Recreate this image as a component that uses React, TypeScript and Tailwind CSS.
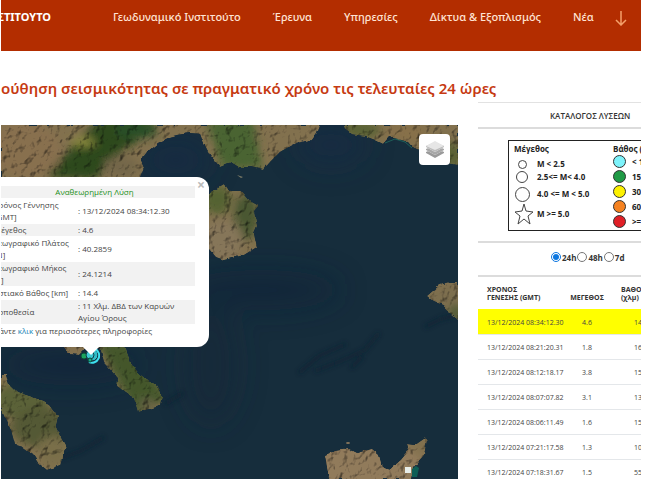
import { useState } from "react";

interface Quake {
    time: string;
    magnitude: string;
    depth: string;
}

const NAV_ITEMS = ["Γεωδυναμικό Ινστιτούτο", "Έρευνα", "Υπηρεσίες", "Δίκτυα & Εξοπλισμός", "Νέα"];

const QUAKES: Quake[] = [
    { time: "13/12/2024 08:34:12.30", magnitude: "4.6", depth: "14" },
    { time: "13/12/2024 08:21:20.31", magnitude: "1.8", depth: "16" },
    { time: "13/12/2024 08:12:18.17", magnitude: "3.8", depth: "15" },
    { time: "13/12/2024 08:07:07.82", magnitude: "3.1", depth: "13" },
    { time: "13/12/2024 08:06:11.49", magnitude: "1.6", depth: "15" },
    { time: "13/12/2024 07:21:17.58", magnitude: "1.3", depth: "10" },
    { time: "13/12/2024 07:18:31.67", magnitude: "1.5", depth: "55" },
];

const DETAILS = [
    { label: "Χρόνος Γέννησης [GMT]", value: "13/12/2024 08:34:12.30" },
    { label: "Μέγεθος", value: "4.6" },
    { label: "Γεωγραφικό Πλάτος [N]", value: "40.2859" },
    { label: "Γεωγραφικό Μήκος [E]", value: "24.1214" },
    { label: "Εστιακό Βάθος [km]", value: "14.4" },
    { label: "Τοποθεσία", value: "11 Χλμ. ΔΒΔ των Καρυών Αγίου Όρους" },
];

const DEPTHS = [
    { dot: "bg-[#7df3fb]", label: "< 15" },
    { dot: "bg-[#1f9a45]", label: "15" },
    { dot: "bg-[#fdf100]", label: "30" },
    { dot: "bg-[#f58220]", label: "60" },
    { dot: "bg-[#e01f26]", label: ">=" },
];

const RANGES = ["24h", "48h", "7d"];

// Coastlines of the north Aegean
const LAND = [
    "M0 0H319L316 8L311 15L296 18L286 23L279 27L270 36L262 45L250 42L239 42L231 37L219 42L209 30L202 17L199 9L189 8L176 10L169 12L157 18L146 27L140 35L143 42L138 55H0Z",
    "M344 0L346 6L350 9L364 11L374 15L382 19L388 12L397 14L407 17L412 23L419 25L432 35L457 40V0Z",
    "M207 72L212 66L222 60L230 66L240 66L247 75L258 81L253 87L256 101L253 108L256 122L243 130L223 135L215 132L208 124L200 100Z",
    "M60 218L67 228L78 229L85 222L99 222L103 238L117 253L116 261L124 267L133 273L137 287L159 281L161 271L155 260L138 249L129 236L124 222Z",
    "M0 250L5 250L8 259L16 267L34 273L49 280L57 291L55 300L60 311L65 320L61 333L59 340L46 345L37 338L32 330L21 322L14 320L10 305L2 290L0 284Z",
    "M324 330L334 326L348 324L356 328L371 324L378 330L381 342L388 345L400 335L408 325L406 319L414 320L424 313L426 316L423 330L412 343L410 354H328Z",
    "M426 171L439 160L449 157L457 157V195L449 188L442 180L432 176Z",
];

function SatelliteImage() {
    return (
        <svg
            className="absolute inset-0 h-full w-full"
            viewBox="0 0 457 354"
            preserveAspectRatio="xMinYMin slice"
            aria-hidden="true"
        >
            <defs>
                <clipPath id="land">
                    {LAND.map((d) => (
                        <path key={d} d={d} />
                    ))}
                </clipPath>
                <filter
                    id="relief"
                    filterUnits="userSpaceOnUse"
                    x="-10"
                    y="-10"
                    width="480"
                    height="380"
                    colorInterpolationFilters="sRGB"
                >
                    <feTurbulence type="fractalNoise" baseFrequency="0.11" numOctaves="4" seed="8" result="noise" />
                    <feDiffuseLighting in="noise" surfaceScale="2.4" diffuseConstant="1.3" lightingColor="#ffffff" result="light">
                        <feDistantLight azimuth="215" elevation="55" />
                    </feDiffuseLighting>
                    <feDisplacementMap in="SourceGraphic" in2="noise" scale="4" xChannelSelector="R" yChannelSelector="G" result="rough" />
                    <feComposite in="rough" in2="light" operator="arithmetic" k1="0.98" result="shaded" />
                    <feComposite in="shaded" in2="rough" operator="in" />
                </filter>
                <filter id="soft" filterUnits="userSpaceOnUse" x="-20" y="-20" width="500" height="400">
                    <feGaussianBlur stdDeviation="4" />
                </filter>
                <filter id="haze" filterUnits="userSpaceOnUse" x="-20" y="-20" width="500" height="400">
                    <feGaussianBlur stdDeviation="14" />
                </filter>
                <filter id="trench" filterUnits="userSpaceOnUse" x="-20" y="-20" width="500" height="400">
                    <feGaussianBlur stdDeviation="2" />
                </filter>
            </defs>

            <rect width="457" height="354" fill="#162d3c" />
            <g filter="url(#haze)" opacity="0.5">
                <ellipse cx="175" cy="35" rx="36" ry="24" fill="#122a46" />
                <ellipse cx="330" cy="20" rx="36" ry="22" fill="#132b47" />
                <ellipse cx="260" cy="165" rx="80" ry="20" fill="#0f2439" />
                <ellipse cx="70" cy="240" rx="70" ry="20" fill="#10233a" />
                <ellipse cx="210" cy="240" rx="28" ry="60" fill="#122638" />
            </g>
            <g filter="url(#trench)" fill="none" stroke="#0c2030" strokeWidth="4" opacity="0.6">
                <path d="M298 248L318 231L345 219" />
                <path d="M314 246L340 236L364 225L378 208" />
                <path d="M424 202L440 194L457 190" />
                <path d="M164 279L182 268" />
                <path d="M60 333L80 326L103 312" />
                <path d="M350 243L362 231" />
            </g>

            <g filter="url(#relief)">
                {LAND.map((d) => (
                    <path key={d} d={d} fill="#85724f" />
                ))}
                <g clipPath="url(#land)">
                    <g filter="url(#soft)">
                        <ellipse cx="25" cy="25" rx="35" ry="28" fill="#8b7150" />
                        <path d="M45 52L78 14L100 -8H150L138 15L112 32L95 55Z" fill="#2f481f" />
                        <ellipse cx="82" cy="17" rx="12" ry="5" fill="#8a8a3c" />
                        <ellipse cx="135" cy="5" rx="22" ry="9" fill="#2c4f25" />
                        <ellipse cx="120" cy="42" rx="18" ry="10" fill="#76684a" />
                        <path d="M205 -5H252L262 45L220 42Z" fill="#4c6532" />
                        <ellipse cx="360" cy="5" rx="20" ry="9" fill="#5b6336" />
                        <ellipse cx="405" cy="8" rx="22" ry="8" fill="#8a7149" />
                        <ellipse cx="445" cy="30" rx="18" ry="14" fill="#5d6335" />
                        <ellipse cx="216" cy="75" rx="14" ry="14" fill="#566431" />
                        <ellipse cx="245" cy="92" rx="12" ry="24" fill="#4b5930" />
                        <ellipse cx="222" cy="115" rx="20" ry="20" fill="#89775a" />
                        <path d="M95 215L128 218L168 275L134 290L118 258Z" fill="#45592a" />
                        <ellipse cx="146" cy="278" rx="9" ry="4" fill="#6d6548" />
                        <ellipse cx="20" cy="275" rx="28" ry="18" fill="#5d6438" />
                        <ellipse cx="40" cy="302" rx="30" ry="20" fill="#575a34" />
                        <ellipse cx="52" cy="325" rx="14" ry="14" fill="#7c6f4a" />
                        <ellipse cx="365" cy="345" rx="60" ry="30" fill="#947b5b" />
                        <ellipse cx="448" cy="178" rx="24" ry="20" fill="#80704f" />
                        <ellipse cx="455" cy="188" rx="7" ry="10" fill="#4f5c35" />
                    </g>
                </g>
            </g>
            <path d="M384 18L394 14L404 17L411 23" fill="none" stroke="#1d5f58" strokeWidth="1" />
            <path d="M236 50L242 52L240 53Z" fill="#7c7b66" />
            <ellipse cx="347" cy="318" rx="2" ry="1" fill="#87765c" />
            <rect x="404" y="342" width="6" height="6" fill="#e8eeea" />
            <path d="M411 344L415 341L418 343L416 352L411 352Z" fill="#0e5e56" />
        </svg>
    );
}

function EpicenterMarkers() {
    return (
        <svg className="absolute top-[222px] left-[79px]" width="20" height="17" viewBox="0 0 20 17" aria-hidden="true">
            <circle cx="12" cy="8" r="6" fill="#31bcc6" stroke="#123" strokeWidth="1" />
            <path d="M15 2A7 7 0 0 1 9 15" fill="none" stroke="#3de0ee" strokeWidth="2" />
            <circle cx="4" cy="9" r="3" fill="#1ba25c" stroke="#0b4a38" strokeWidth="1" />
            <circle cx="10" cy="8" r="4" fill="#3cc8d2" stroke="#123c48" strokeWidth="1" />
            <circle cx="10" cy="13" r="2" fill="#19a58a" stroke="#0b4a38" strokeWidth="1" />
        </svg>
    );
}

function QuakePopup() {
    return (
        <div className="absolute top-[52px] -left-[21px] w-[229px]">
            <div className="relative rounded-xl bg-white px-[14px] pt-2 pb-[10px] text-[8px] leading-3 text-[#444]">
                <button
                    type="button"
                    aria-label="Κλείσιμο"
                    className="absolute top-0 right-1 text-[14px] leading-4 font-bold text-[#bbb]"
                >
                    ×
                </button>
                <table className="w-full border-separate border-spacing-x-0 border-spacing-y-px">
                    <thead>
                        <tr>
                            <th colSpan={2} className="bg-[#f2f2f2] p-0 text-center font-normal text-[#1c9020]">
                                Αναθεωρημένη Λύση
                            </th>
                        </tr>
                    </thead>
                    <tbody>
                        {DETAILS.map((item) => (
                            <tr key={item.label} className="odd:bg-white even:bg-[#f2f2f2]">
                                <th scope="row" className="w-[84px] p-0 pr-2 text-left font-normal">
                                    {item.label}
                                </th>
                                <td className="p-0 pr-3">: {item.value}</td>
                            </tr>
                        ))}
                    </tbody>
                </table>
                <p>
                    Κάντε{" "}
                    <a href="#details" className="text-[#1b87b8]">
                        κλικ
                    </a>{" "}
                    για περισσότερες πληροφορίες
                </p>
            </div>
            <svg className="absolute top-full left-[102px] -mt-px" width="18" height="9" viewBox="0 0 18 9" aria-hidden="true">
                <path d="M0 0H18L9 9Z" fill="#fff" />
            </svg>
        </div>
    );
}

function LayersButton() {
    return (
        <button
            type="button"
            aria-label="Επίπεδα χάρτη"
            className="absolute top-[9px] right-2 flex size-[31px] items-center justify-center rounded-sm bg-white"
        >
            <svg width="20" height="20" viewBox="0 0 20 20" aria-hidden="true">
                <path d="M1 12L10 8L19 12V13L10 18L1 13Z" fill="#9a9a9a" />
                <path d="M1 10L10 6L19 10L10 15Z" fill="#fff" />
                <path d="M1 9L10 5L19 9V10L10 15L1 10Z" fill="#a8a8a8" />
                <path d="M1 7L10 3L19 7L10 12Z" fill="#fff" />
                <path d="M1 6L10 2L19 6V7L10 12L1 7Z" fill="#bcbcbc" />
                <path d="M1 6L10 1L19 6L10 10Z" fill="#e6e6e6" />
            </svg>
        </button>
    );
}

function Legend() {
    return (
        <div className="ml-[30px] flex h-[91px] w-[200px] border border-[#222] pt-[3px] pl-[5px] text-[8px] leading-[10px] font-bold text-[#222]">
            <div className="w-[99px] shrink-0">
                <h3>Μέγεθος</h3>
                <ul>
                    <li className="flex h-4 items-center pt-1">
                        <span className="ml-1 mr-[10px] size-[9px] rounded-full border border-[#444]" />M &lt; 2.5
                    </li>
                    <li className="flex h-[14px] items-center">
                        <span className="ml-[2px] mr-[9px] size-3 rounded-full border border-[#444]" />
                        2.5&lt;= M&lt; 4.0
                    </li>
                    <li className="flex h-5 items-center">
                        <span className="ml-px mr-[7px] size-[15px] rounded-full border border-[#444]" />
                        4.0 &lt;= M &lt; 5.0
                    </li>
                    <li className="flex h-5 items-center">
                        <svg className="mr-[3px]" width="20" height="22" viewBox="0 0 20 22" aria-hidden="true">
                            <path
                                d="M10 1L12 8L19 9L14 13L16 21L10 16L4 21L6 13L1 9L8 8Z"
                                fill="none"
                                stroke="#444"
                                strokeWidth="1"
                            />
                        </svg>
                        M &gt;= 5.0
                    </li>
                </ul>
            </div>
            <div className="shrink-0">
                <h3>Βάθος (χλμ)</h3>
                <ul>
                    {DEPTHS.map((depth) => (
                        <li key={depth.label} className="flex h-[15px] items-center gap-[6px]">
                            <span className={`size-[13px] rounded-full border border-[#333] ${depth.dot}`} />
                            {depth.label}
                        </li>
                    ))}
                </ul>
            </div>
        </div>
    );
}

function RangePicker() {
    const [range, setRange] = useState("24h");

    return (
        <div className="flex h-8 items-center pl-[73px] pb-1">
            {RANGES.map((item) => (
                <label key={item} className="flex items-center gap-px pr-px text-[8px] leading-3 font-bold text-[#333]">
                    <input
                        type="radio"
                        name="range"
                        value={item}
                        checked={range === item}
                        onChange={() => setRange(item)}
                        className="m-0 size-[10px] accent-[#0b76e0]"
                    />
                    <span className="pt-[2px]">{item}</span>
                </label>
            ))}
        </div>
    );
}

function QuakeTable() {
    return (
        <table className="w-[200px] table-fixed border-collapse text-[7px] leading-[8px] text-[#444]">
            <thead>
                <tr className="h-8 align-bottom text-[#333]">
                    <th className="w-[82px] pb-[7px] pl-[9px] text-left">
                        ΧΡΟΝΟΣ
                        <br />
                        ΓΕΝΕΣΗΣ (GMT)
                    </th>
                    <th className="w-[54px] pb-[7px] text-center">ΜΕΓΕΘΟΣ</th>
                    <th className="pb-[7px] pl-[7px] text-left">
                        ΒΑΘΟΣ
                        <br />
                        (χλμ)
                    </th>
                </tr>
            </thead>
            <tbody>
                {QUAKES.map((quake) => (
                    <tr key={quake.time} className="h-[25px] border-t border-[#e4e7ea] first:border-0 first:bg-[#ffff00]">
                        <td className="pt-[3px] pl-[9px] whitespace-nowrap">{quake.time}</td>
                        <td className="pt-[3px] text-center">{quake.magnitude}</td>
                        <td className="pt-[3px] pl-5">{quake.depth}</td>
                    </tr>
                ))}
            </tbody>
        </table>
    );
}

export default function App() {
    return (
        <div className="flex h-screen flex-col bg-white pr-[7px] pb-[5px] pl-px font-['Open_Sans','Noto_Sans',sans-serif]">
            <header className="flex h-[51px] shrink-0 items-start overflow-hidden bg-[#b32d00] pt-[9px] pr-[14px] font-['Noto_Sans',sans-serif] text-[11px] leading-4 whitespace-nowrap text-[#ffe3d3]">
                <a href="#home" className="flex w-[50px] justify-end overflow-hidden font-bold text-white">
                    ΣΤΙΤΟΥΤΟ
                </a>
                <nav className="ml-[62px] flex gap-8 font-medium">
                    {NAV_ITEMS.map((item) => (
                        <a key={item} href="#menu">
                            {item}
                        </a>
                    ))}
                </nav>
                <button type="button" aria-label="Περισσότερα" className="ml-auto pt-px">
                    <svg width="12" height="16" viewBox="0 0 12 16" fill="none" stroke="#f5a06a" strokeWidth="1.5" aria-hidden="true">
                        <path d="M6 1V15M1 10L6 15L11 10" />
                    </svg>
                </button>
            </header>

            <main className="flex min-h-0 flex-1 flex-col overflow-hidden">
                <h1 className="h-[51px] shrink-0 pt-[27px] font-['Noto_Sans',sans-serif] text-[15px] leading-5 font-semibold whitespace-nowrap text-[#c63a12]">
                    ούθηση σεισμικότητας σε πραγματικό χρόνο τις τελευταίες 24 ώρες
                </h1>
                <div className="flex min-h-0 flex-1 gap-5">
                    <section className="relative mt-[23px] min-w-0 flex-1 overflow-hidden">
                        <SatelliteImage />
                        <EpicenterMarkers />
                        <QuakePopup />
                        <LayersButton />
                    </section>
                    <aside className="w-[163px] shrink-0 overflow-hidden">
                        <h2 className="h-[27px] border-t border-b-2 border-t-[#e2e2e2] border-b-[#dcdcdc] pl-[72px] text-[8px] leading-[26px] font-semibold whitespace-nowrap text-[#333]">
                            ΚΑΤΑΛΟΓΟΣ ΛΥΣΕΩΝ
                        </h2>
                        <div className="border-b-2 border-[#dcdcdc] pt-[11px] pb-[10px]">
                            <Legend />
                        </div>
                        <div className="border-b-2 border-[#dcdcdc]">
                            <RangePicker />
                        </div>
                        <QuakeTable />
                    </aside>
                </div>
            </main>
        </div>
    );
}
